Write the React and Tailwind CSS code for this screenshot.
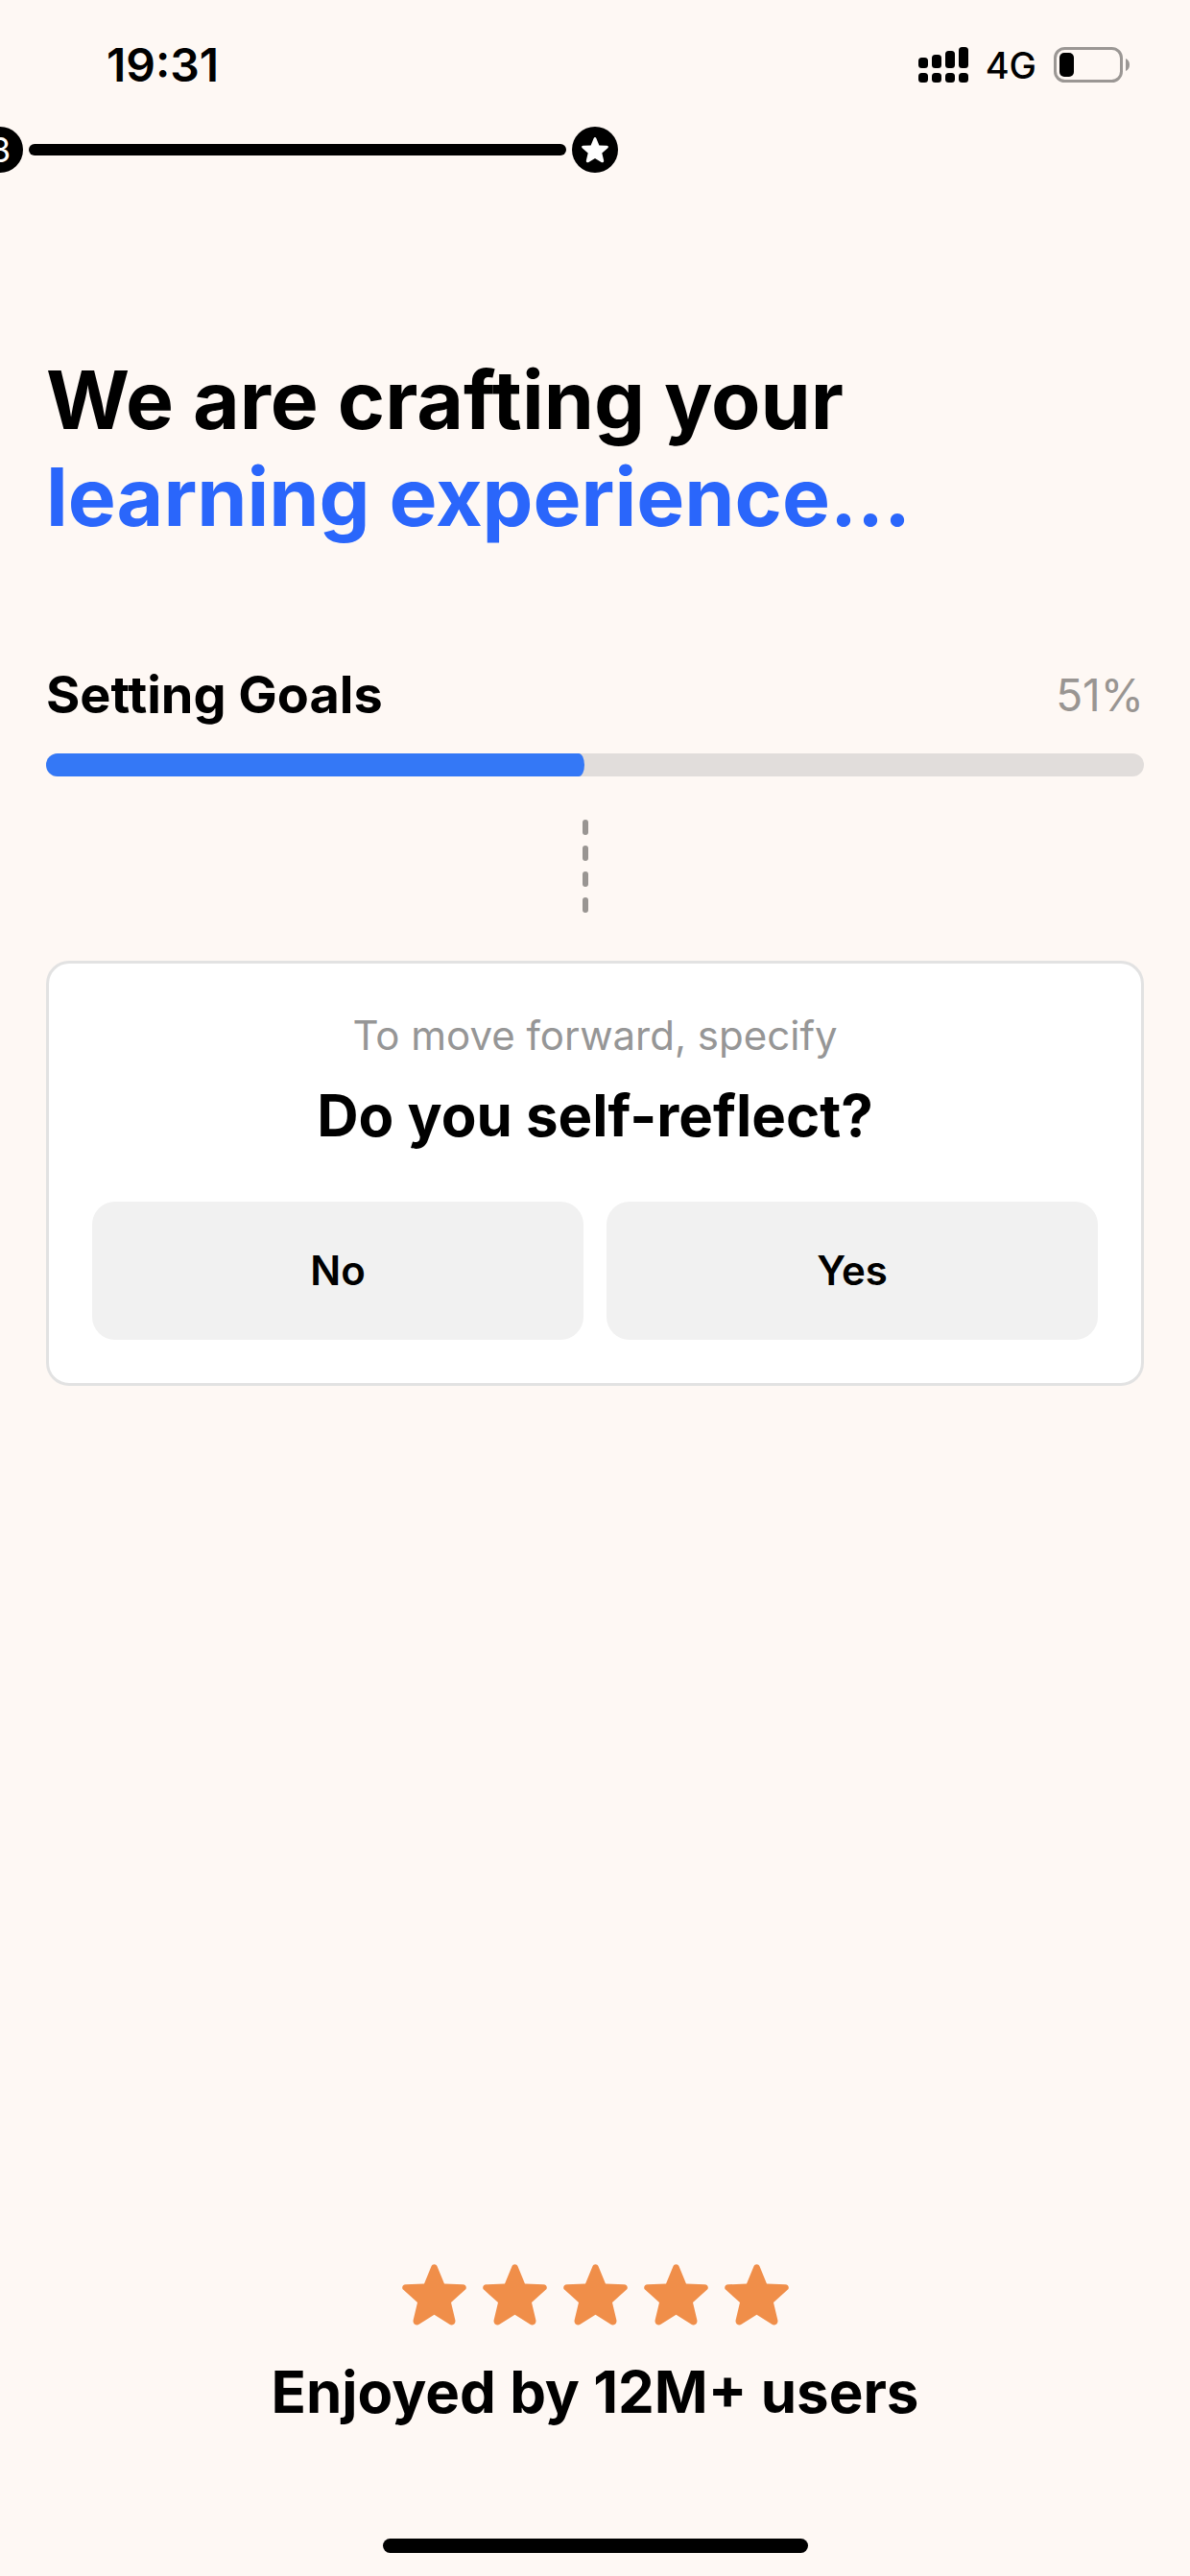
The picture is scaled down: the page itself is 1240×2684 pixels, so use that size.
const STAR =
  "M33.5 2.2C34.9 2.2 36 3.1 36.6 4.5L44 22.6L63.4 23.3C66.8 23.5 68 27 65.4 29.1L51 42L55.4 60.5C56 64 53 66 50.2 65.3L33.5 54.8L16.8 65.3C14 66 11 64 11.6 60.5L16 42L1.6 29.1C-1 27 0.2 23.5 3.6 23.3L23 22.6L30.4 4.5C31 3.1 32.1 2.2 33.5 2.2Z";

function Star({ className }) {
  return (
    <svg viewBox="0 0 67 67" className={className} fill="currentColor" aria-hidden="true">
      <path d={STAR} />
    </svg>
  );
}

function Signal() {
  const bars = [
    { x: 0, y: 11, h: 11 },
    { x: 14, y: 8, h: 14 },
    { x: 28, y: 4, h: 18 },
    { x: 42, y: 0, h: 22 },
  ];
  return (
    <svg width="52" height="38" viewBox="0 0 52 38" aria-hidden="true">
      {bars.map((b) => (
        <g key={b.x}>
          <rect x={b.x} y={b.y} width="10" height={b.h} rx="3.5" />
          <rect x={b.x} y="27" width="10" height="10" rx="3.5" />
        </g>
      ))}
    </svg>
  );
}

function Battery() {
  return (
    <svg width="80" height="38" viewBox="0 0 80 38" aria-hidden="true">
      <rect x="1.5" y="1.5" width="69" height="34" rx="10" fill="none" stroke="#9b9794" strokeWidth="3" />
      <rect x="6" y="6" width="15" height="25" rx="5" />
      <path d="M75 12C77.5 13 79 15.5 79 18.5S77.5 24 75 25Z" fill="#9b9794" />
    </svg>
  );
}

function StatusBar() {
  return (
    <header className="flex h-[132px] items-start justify-between pt-10 pr-[62px] pl-[111px]">
      <span className="text-[48px] leading-[56px] font-semibold">19:31</span>
      <div className="flex h-14 items-center gap-[18px]">
        <Signal />
        <span className="text-[38px] leading-[56px] font-medium">4G</span>
        <Battery />
      </div>
    </header>
  );
}

function Steps() {
  return (
    <div className="-ml-6 flex w-[calc(50%+48px)] items-center gap-1.5">
      <span className="flex size-12 shrink-0 items-center justify-center rounded-full bg-black text-[36px] leading-none text-white">
        3
      </span>
      <span className="h-3 flex-1 rounded-full bg-black" />
      <span className="flex size-12 shrink-0 items-center justify-center rounded-full bg-black text-white">
        <Star className="size-7" />
      </span>
    </div>
  );
}

export default function App() {
  return (
    <div className="flex min-h-screen flex-col overflow-hidden bg-[#fef8f4] font-['Inter',sans-serif] text-black">
      <StatusBar />
      <Steps />

      <main className="flex flex-1 flex-col px-12">
        <h1 className="mt-[186px] text-[84px] leading-[101px] font-bold">
          We are crafting your
          <span className="block text-[#2a66fb]">learning experience...</span>
        </h1>

        <section className="mt-[123px]">
          <div className="flex items-center justify-between">
            <h2 id="stage" className="text-[54px] leading-[66px] font-bold">Setting Goals</h2>
            <span className="text-[46px] leading-[66px] text-[#999592]">51%</span>
          </div>
          <div
            role="progressbar"
            aria-labelledby="stage"
            aria-valuenow={51}
            aria-valuemin={0}
            aria-valuemax={100}
            className="mt-7 h-6 overflow-hidden rounded-full bg-[#e1dddb]"
          >
            <div className="h-full w-[49%] rounded-r-[6px_12px] bg-[#3478f6]" />
          </div>
          <div className="mt-[45px] flex w-[49%] flex-col items-end gap-[11px]">
            {[0, 1, 2, 3].map((i) => (
              <span key={i} className="-mr-1 h-4 w-1.5 rounded-full bg-[#999592]" />
            ))}
          </div>
        </section>

        <section className="mt-[50px] rounded-3xl border-3 border-[#e2e2e2] bg-white px-[45px] pt-12 pb-[45px] text-center">
          <p className="text-[42px] leading-[54px] text-[#969696]">To move forward, specify</p>
          <h2 className="mt-5 text-[60px] leading-[72px] font-bold">Do you self-reflect?</h2>
          <div className="mt-[54px] grid grid-cols-2 gap-6">
            <button type="button" className="h-36 rounded-3xl bg-[#f1f1f1] pb-0.5 text-[42px] font-semibold">No</button>
            <button type="button" className="h-36 rounded-3xl bg-[#f1f1f1] pb-0.5 text-[42px] font-semibold">Yes</button>
          </div>
        </section>
      </main>

      <footer className="flex flex-col items-center pb-6">
        <div className="flex gap-[17px] text-[#f08e49]" role="img" aria-label="5 out of 5 stars">
          {[0, 1, 2, 3, 4].map((i) => (
            <Star key={i} className="size-[67px]" />
          ))}
        </div>
        <p className="mt-8 text-[60px] leading-[72px] font-bold">Enjoyed by 12M+ users</p>
        <div className="mt-[117px] h-[15px] w-[443px] rounded-full bg-black" />
      </footer>
    </div>
  );
}
